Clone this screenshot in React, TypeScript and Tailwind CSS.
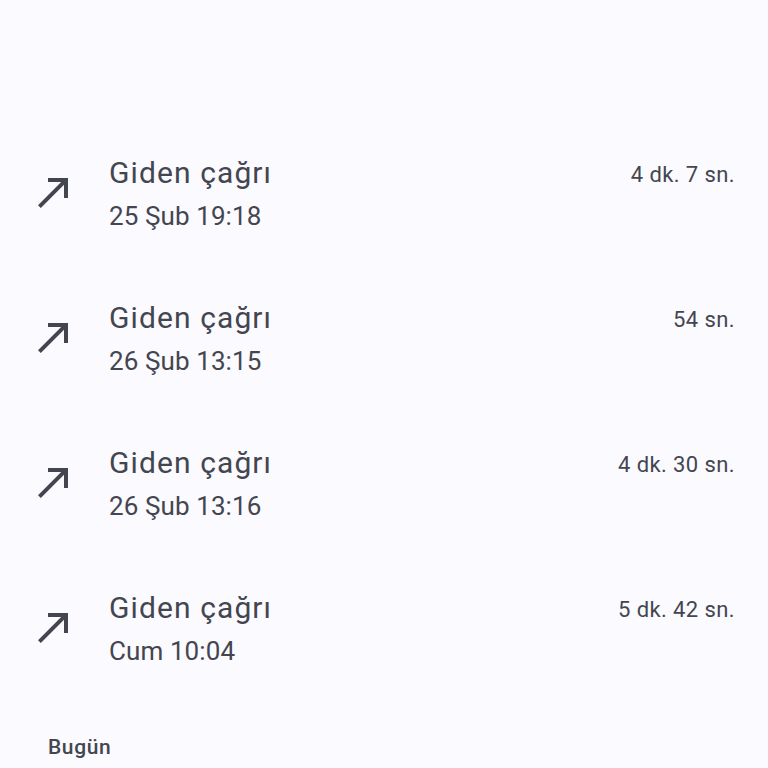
import React from "react";

const rows = [
  { date: "25 Şub 19:18", dur: "4 dk. 7 sn." },
  { date: "26 Şub 13:15", dur: "54 sn." },
  { date: "26 Şub 13:16", dur: "4 dk. 30 sn." },
  { date: "Cum 10:04", dur: "5 dk. 42 sn." },
];

function CallMade() {
  return (
    <svg width="48" height="48" viewBox="0 0 24 24" fill="#44464f">
      <path d="M9 5v2h6.59L4 18.59 5.41 20 17 8.41V15h2V5z" />
    </svg>
  );
}

export default function App() {
  return (
    <div
      className="w-[768px] h-[768px] overflow-hidden bg-[#fafaff] text-[#44464f] flex flex-col pt-[122px]"
      style={{ fontFamily: "Roboto, 'Noto Sans', sans-serif" }}
    >
      {rows.map((r, i) => (
        <div key={i} className="h-[145px] flex items-center pl-[30px] pr-[33px]">
          <div className="w-[48px] h-[48px] mt-[-5px] shrink-0">
            <CallMade />
          </div>
          <div className="flex-1 ml-[31px] flex flex-col">
            <div className="flex justify-between items-center h-[40px]">
              <span className="text-[30px] leading-[40px] tracking-[1.1px]">Giden çağrı</span>
              <span className="text-[22px] leading-[40px] mt-[4px] tracking-[0.4px]">{r.dur}</span>
            </div>
            <div className="text-[26px] leading-[40px] mt-[3px] tracking-[0.1px]">{r.date}</div>
          </div>
        </div>
      ))}
      <div className="pl-[48px] mt-[31px] text-[21px] leading-[28px] font-medium tracking-[0.6px]">Bugün</div>
    </div>
  );
}
